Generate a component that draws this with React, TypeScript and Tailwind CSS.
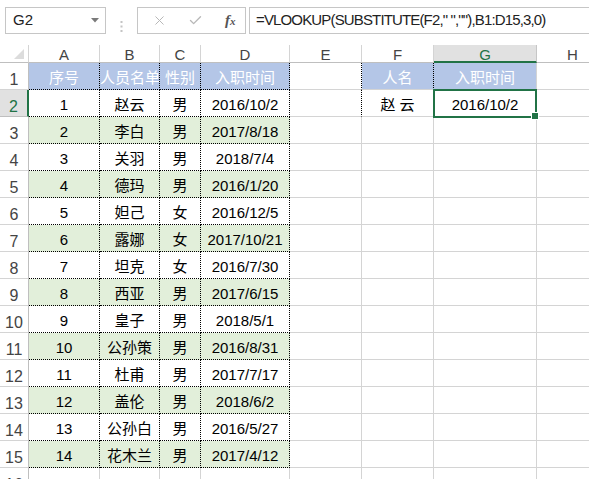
import React from 'react';
import { X, Check } from 'lucide-react';

const rows: [string, string, string, string][] = [
  ['1', '赵云', '男', '2016/10/2'],
  ['2', '李白', '男', '2017/8/18'],
  ['3', '关羽', '男', '2018/7/4'],
  ['4', '德玛', '男', '2016/1/20'],
  ['5', '妲己', '女', '2016/12/5'],
  ['6', '露娜', '女', '2017/10/21'],
  ['7', '坦克', '女', '2016/7/30'],
  ['8', '西亚', '男', '2017/6/15'],
  ['9', '皇子', '男', '2018/5/1'],
  ['10', '公孙策', '男', '2016/8/31'],
  ['11', '杜甫', '男', '2017/7/17'],
  ['12', '盖伦', '男', '2018/6/2'],
  ['13', '公孙白', '男', '2016/5/27'],
  ['14', '花木兰', '男', '2017/4/12'],
];

const header = ['序号', '人员名单', '性别', '入职时间'];
const letters = ['A', 'B', 'C', 'D', 'E', 'F', 'G', 'H'];

const txt = 'pt-[7px] leading-[15px] text-[15px] text-center whitespace-nowrap overflow-hidden';

function FormulaBar() {
  return (
    <div className="h-[45px] pt-[7px] flex">
      <div className="ml-[5px] w-[101px] h-[27px] border border-[#c6c6c6] flex items-center pl-[7px] pr-[6px] text-[15px] text-[#222]">
        <span className="flex-1">G2</span>
        <svg width="8" height="5" viewBox="0 0 8 5">
          <polygon points="0,0 8,0 4,4.5" fill="#7a7a7a" />
        </svg>
      </div>
      <div className="w-[31px] flex items-center justify-center">
        <svg width="3" height="11" viewBox="0 0 3 11">
          <rect x="0.5" y="0" width="2" height="2" fill="#c4c4c4" />
          <rect x="0.5" y="4.5" width="2" height="2" fill="#c4c4c4" />
          <rect x="0.5" y="9" width="2" height="2" fill="#c4c4c4" />
        </svg>
      </div>
      <div className="w-[109px] h-[27px] border border-[#c6c6c6] flex items-center">
        <X className="ml-[14px] text-[#b8b8b8]" size={15} strokeWidth={1.6} />
        <Check className="ml-[21px] text-[#b8b8b8]" size={15} strokeWidth={2.2} />
        <span className="ml-[22px] font-['Liberation_Serif',serif] italic font-bold text-[15px] text-[#555] leading-none">
          f<span className="text-[11px]">x</span>
        </span>
      </div>
      <div className="ml-[3px] flex-1 h-[27px] border border-r-0 border-[#c6c6c6] flex items-center pl-[6px] text-[15px] tracking-[-0.85px] text-[#222] whitespace-nowrap">
        =VLOOKUP(SUBSTITUTE(F2," ",""),B1:D15,3,0)
      </div>
    </div>
  );
}

function ColumnHeaders() {
  return (
    <>
      <div className="border-r border-b border-r-[#d4d4d4] border-b-[#bfbfbf] flex items-end justify-end pr-[4px] pb-[3px]">
        <svg width="10" height="10" viewBox="0 0 10 10">
          <polygon points="10,0 10,10 0,10" fill="#dcdcdc" />
        </svg>
      </div>
      {letters.map((l) =>
        l === 'G' ? (
          <div key={l} className="bg-[#e1e1e1] border-r border-r-[#c6c6c6] border-b-2 border-b-[#217346] text-[#217346] pt-[2px] leading-[15px] text-[15px] text-center">
            {l}
          </div>
        ) : (
          <div key={l} className="border-r border-b border-r-[#d4d4d4] border-b-[#bfbfbf] text-[#444] pt-[2px] leading-[15px] text-[15px] text-center">
            {l}
          </div>
        )
      )}
    </>
  );
}

function RowHeader({ n }: { n: number }) {
  if (n === 2) {
    return (
      <div className="bg-[#e1e1e1] border-r-2 border-b border-r-[#217346] border-b-[#bfbfbf] text-[#217346] text-[16px] leading-[16px] pt-[9px] text-center">
        {n}
      </div>
    );
  }
  return (
    <div className="border-r border-b border-r-[#bfbfbf] border-b-[#d4d4d4] text-[#444] text-[16px] leading-[16px] pt-[9px] text-center">
      {n}
    </div>
  );
}

function TableCell({ value, kind }: { value: string; kind: 'head' | 'green' | 'plain' }) {
  if (kind === 'head') {
    return <div className={`bg-[#b4c6e7] text-white border-r border-b border-dotted border-black ${txt}`}>{value}</div>;
  }
  if (kind === 'green') {
    return <div className={`bg-[#e2efda] text-black border-r border-b border-dotted border-black ${txt}`}>{value}</div>;
  }
  return <div className={`bg-white text-black border-r border-b border-dotted border-black ${txt}`}>{value}</div>;
}

function Blank({ dottedRight }: { dottedRight?: boolean }) {
  if (dottedRight) {
    return <div className="border-r border-b border-r-black [border-right-style:dotted] border-b-[#d4d4d4]" />;
  }
  return <div className="border-r border-b border-[#d4d4d4]" />;
}

export default function App() {
  const lines: React.ReactNode[] = [];

  for (let r = 1; r <= 16; r++) {
    lines.push(<RowHeader key={`h${r}`} n={r} />);

    // A-D
    for (let c = 0; c < 4; c++) {
      if (r === 1) {
        lines.push(<TableCell key={`${r}-${c}`} value={header[c]} kind="head" />);
      } else if (r <= 15) {
        lines.push(
          <TableCell key={`${r}-${c}`} value={rows[r - 2][c]} kind={r % 2 === 1 ? 'green' : 'plain'} />
        );
      } else {
        lines.push(<Blank key={`${r}-${c}`} />);
      }
    }

    // E
    lines.push(<Blank key={`${r}-E`} dottedRight={r <= 2} />);

    // F, G
    if (r === 1) {
      lines.push(
        <div key="F1" className={`bg-[#b4c6e7] text-white border-r border-b border-r-black [border-right-style:dotted] border-b-[#d4d4d4] ${txt}`}>
          人名
        </div>
      );
      lines.push(
        <div key="G1" className={`bg-[#b4c6e7] text-white border-r border-b border-[#d4d4d4] ${txt}`}>
          入职时间
        </div>
      );
    } else if (r === 2) {
      lines.push(
        <div key="F2" className={`text-black border-r border-b border-[#d4d4d4] ${txt}`}>
          赵 云
        </div>
      );
      lines.push(
        <div key="G2" className="relative border-r border-b border-[#d4d4d4]">
          <div className={`text-black ${txt}`}>2016/10/2</div>
          <div className="absolute -left-px -top-px -right-px -bottom-[2px] border-2 border-[#217346]" />
          <div className="absolute -right-[2px] -bottom-[3px] w-[6px] h-[6px] bg-[#217346] outline outline-1 outline-white" />
        </div>
      );
    } else {
      lines.push(<Blank key={`${r}-F`} />);
      lines.push(<Blank key={`${r}-G`} />);
    }

    // H
    lines.push(<Blank key={`${r}-H`} />);
  }

  return (
    <div className="w-[589px] h-[479px] overflow-hidden bg-white font-['Liberation_Sans','Noto_Sans_CJK_SC',sans-serif]">
      <FormulaBar />
      <div className="grid w-max grid-cols-[29px_71px_60px_41px_89px_72px_72px_103px_72px] grid-rows-[18px] auto-rows-[27px]">
        <ColumnHeaders />
        {lines}
      </div>
    </div>
  );
}
